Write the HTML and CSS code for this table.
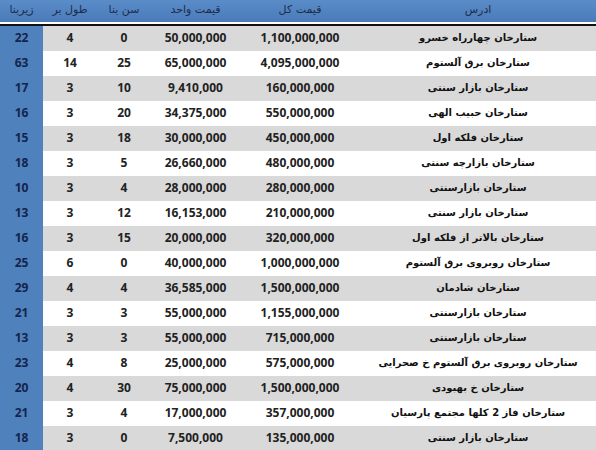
FILE: index.html
```html
<!DOCTYPE html>
<html lang="fa">
<head>
<meta charset="utf-8">
<title>جدول قیمت</title>
<link rel="stylesheet" href="styles.css">
</head>
<body>
<div class="sheet" dir="rtl">
  <div class="row head">
    <div class="c addr">ادرس</div>
    <div class="c">قیمت کل</div>
    <div class="c">قیمت واحد</div>
    <div class="c">سن بنا</div>
    <div class="c">طول بر</div>
    <div class="c area">زیربنا</div>
  </div>
  <div class="rule"></div>
  <div class="row odd"><div class="c addr">ستارخان چهارراه خسرو</div><div class="c n">1,100,000,000</div><div class="c n">50,000,000</div><div class="c n">0</div><div class="c n">4</div><div class="c n area">22</div></div>
  <div class="row"><div class="c addr">ستارخان برق آلستوم</div><div class="c n">4,095,000,000</div><div class="c n">65,000,000</div><div class="c n">25</div><div class="c n">14</div><div class="c n area">63</div></div>
  <div class="row odd"><div class="c addr">ستارخان بازار سنتی</div><div class="c n">160,000,000</div><div class="c n">9,410,000</div><div class="c n">10</div><div class="c n">3</div><div class="c n area">17</div></div>
  <div class="row"><div class="c addr">ستارخان حبیب الهی</div><div class="c n">550,000,000</div><div class="c n">34,375,000</div><div class="c n">20</div><div class="c n">3</div><div class="c n area">16</div></div>
  <div class="row odd"><div class="c addr">ستارخان فلکه اول</div><div class="c n">450,000,000</div><div class="c n">30,000,000</div><div class="c n">18</div><div class="c n">3</div><div class="c n area">15</div></div>
  <div class="row"><div class="c addr">ستارخان بازارچه سنتی</div><div class="c n">480,000,000</div><div class="c n">26,660,000</div><div class="c n">5</div><div class="c n">3</div><div class="c n area">18</div></div>
  <div class="row odd"><div class="c addr">ستارخان بازارسنتی</div><div class="c n">280,000,000</div><div class="c n">28,000,000</div><div class="c n">4</div><div class="c n">3</div><div class="c n area">10</div></div>
  <div class="row"><div class="c addr">ستارخان بازار سنتی</div><div class="c n">210,000,000</div><div class="c n">16,153,000</div><div class="c n">12</div><div class="c n">3</div><div class="c n area">13</div></div>
  <div class="row odd"><div class="c addr">ستارخان بالاتر از فلکه اول</div><div class="c n">320,000,000</div><div class="c n">20,000,000</div><div class="c n">15</div><div class="c n">3</div><div class="c n area">16</div></div>
  <div class="row"><div class="c addr">ستارخان روبروی برق آلستوم</div><div class="c n">1,000,000,000</div><div class="c n">40,000,000</div><div class="c n">0</div><div class="c n">6</div><div class="c n area">25</div></div>
  <div class="row odd"><div class="c addr">ستارخان شادمان</div><div class="c n">1,500,000,000</div><div class="c n">36,585,000</div><div class="c n">4</div><div class="c n">4</div><div class="c n area">29</div></div>
  <div class="row"><div class="c addr">ستارخان بازارسنتی</div><div class="c n">1,155,000,000</div><div class="c n">55,000,000</div><div class="c n">3</div><div class="c n">3</div><div class="c n area">21</div></div>
  <div class="row odd"><div class="c addr">ستارخان بازارسنتی</div><div class="c n">715,000,000</div><div class="c n">55,000,000</div><div class="c n">3</div><div class="c n">3</div><div class="c n area">13</div></div>
  <div class="row"><div class="c addr">ستارخان روبروی برق آلستوم خ صحرایی</div><div class="c n">575,000,000</div><div class="c n">25,000,000</div><div class="c n">8</div><div class="c n">4</div><div class="c n area">23</div></div>
  <div class="row odd"><div class="c addr">ستارخان خ بهبودی</div><div class="c n">1,500,000,000</div><div class="c n">75,000,000</div><div class="c n">30</div><div class="c n">4</div><div class="c n area">20</div></div>
  <div class="row"><div class="c addr">ستارخان فاز 2 کلها مجتمع پارسیان</div><div class="c n">357,000,000</div><div class="c n">17,000,000</div><div class="c n">4</div><div class="c n">3</div><div class="c n area">21</div></div>
  <div class="row odd"><div class="c addr">ستارخان بازار سنتی</div><div class="c n">135,000,000</div><div class="c n">7,500,000</div><div class="c n">0</div><div class="c n">3</div><div class="c n area">18</div></div>
</div>
</body>
</html>
```
FILE: styles.css
```css
html, body {
  margin: 0;
  padding: 0;
  background: #ffffff;
}

.sheet {
  width: 596px;
  height: 450px;
  overflow: hidden;
  background: #ffffff;
}

.row {
  display: grid;
  grid-template-columns: 236px 120px 89px 54px 54px 43px;
  height: 25px;
}

.row.odd {
  background: #d9d9d9;
}

.c {
  display: flex;
  align-items: center;
  justify-content: center;
  padding-bottom: 3px;
  font-family: "DejaVu Sans", "Liberation Sans", sans-serif;
  font-weight: bold;
  font-size: 10px;
  color: #111111;
  white-space: nowrap;
}

.c.n {
  font-family: "Open Sans", "Liberation Sans", sans-serif;
  font-weight: 700;
  font-size: 12px;
  color: #222222;
  direction: ltr;
}

.c.area {
  background: #4f81bd;
  color: #14244a;
}

.head {
  height: 22px;
  background: linear-gradient(#5a8cc8, #4a7bb9);
}

.head .c {
  font-weight: normal;
  font-size: 11px;
  color: #1c2c4c;
  padding-bottom: 4px;
}

.head .c.area {
  background: transparent;
}

.rule {
  height: 2px;
  background: #ffffff;
  border-bottom: 2px solid #111111;
}
```
